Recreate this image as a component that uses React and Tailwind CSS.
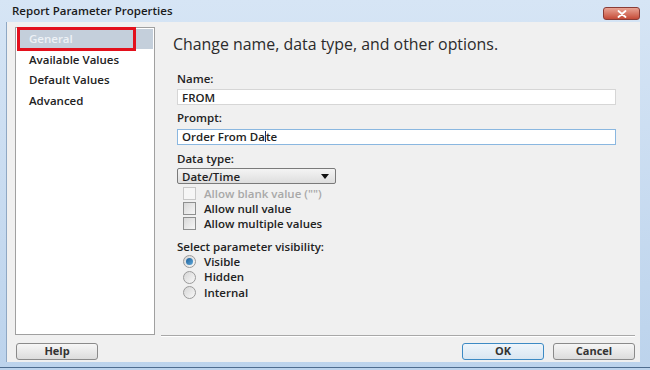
import React from "react";

const font = { fontFamily: '"Open Sans", "Noto Sans", sans-serif' };

function Checkbox({ label, disabled }) {
  return (
    <div className="flex items-center h-[15px]">
      <div
        className={
          "w-[13px] h-[13px] border " +
          (disabled
            ? "border-[#c8c8c8] bg-[#f6f6f6]"
            : "border-[#8e8f8f] bg-gradient-to-br from-[#d8d8d8] to-[#f6f6f6]")
        }
      />
      <span
        className={
          "ml-[8px] text-[11.5px] font-semibold leading-none " +
          (disabled ? "text-[#a8a8a8]" : "text-[#222]")
        }
      >
        {label}
      </span>
    </div>
  );
}

function Radio({ label, checked }) {
  return (
    <div className="flex items-center h-[15.5px]">
      <div className="w-[13px] h-[13px] rounded-full border border-[#9a9a9a] bg-gradient-to-br from-[#d6d6d6] to-[#f8f8f8] flex items-center justify-center">
        {checked && (
          <div className="w-[7px] h-[7px] rounded-full bg-gradient-to-br from-[#1a5f9a] to-[#5fa8d8]" />
        )}
      </div>
      <span className="ml-[8px] text-[11.5px] font-semibold leading-none text-[#222]">
        {label}
      </span>
    </div>
  );
}

function Button({ children, primary, className = "" }) {
  return (
    <div
      className={
        "h-[17px] w-[82px] rounded-[3px] border flex items-center justify-center text-[11px] font-bold text-[#333] " +
        (primary
          ? "border-[#3c8ac4] bg-gradient-to-b from-[#eef5fb] to-[#d9e6f1]"
          : "border-[#8a8a8a] bg-gradient-to-b from-[#f6f6f6] to-[#dcdcdc]") +
        " " +
        className
      }
    >
      {children}
    </div>
  );
}

export default function App() {
  return (
    <div
      style={font}
      className="w-[650px] h-[370px] bg-gradient-to-b from-[#d6e5f5] to-[#bcd3ec] flex flex-col overflow-hidden"
    >
      {/* Title bar */}
      <div className="h-[22px] flex items-center relative">
        <span className="ml-[12px] text-[11.5px] font-semibold text-[#1b1b1b] leading-none">
          Report Parameter Properties
        </span>
        <div className="absolute left-[603px] top-[7px] w-[37px] h-[13px] rounded-[3px] border border-[#8a3c36] bg-gradient-to-b from-[#e8a394] to-[#c44a37] flex items-center justify-center">
          <svg width="10" height="8" viewBox="0 0 10 8">
            <path d="M1.5 1 L8.5 7 M8.5 1 L1.5 7" stroke="#fff" strokeWidth="1.8" strokeLinecap="round" />
          </svg>
        </div>
      </div>

      {/* Client area */}
      <div className="ml-[6px] mr-[10px] h-[340px] bg-[#f0f0f0] flex flex-col border-l border-[#8fa8c4]">
        <div className="flex h-[313px]">
          {/* Left list */}
          <div className="ml-[8px] mt-[5px] w-[140px] h-[308px] bg-white border border-[#a0a0a0] relative pt-[1px] px-[1px]">
            <div className="h-[20px] bg-[#c4cfdb] flex items-center pl-[12px] text-[11.5px] text-[#eef2f6] font-semibold">
              General
            </div>
            <div className="h-[20.5px] flex items-center pl-[12px] text-[11.5px] text-[#222] font-semibold">
              Available Values
            </div>
            <div className="h-[20.5px] flex items-center pl-[12px] text-[11.5px] text-[#222] font-semibold">
              Default Values
            </div>
            <div className="h-[20.5px] flex items-center pl-[12px] text-[11.5px] text-[#222] font-semibold">
              Advanced
            </div>
            <div className="absolute left-[1px] top-[-1px] w-[119px] h-[24px] border-[3.5px] border-[#e3101c]" />
          </div>

          {/* Right content */}
          <div className="ml-[18px] flex-1 flex flex-col pr-[24px]">
            <div className="mt-[15px] text-[15.9px] text-[#2b2b2b] leading-none">
              Change name, data type, and other options.
            </div>
            <div className="mt-[20px] ml-[4px] text-[11.5px] font-semibold text-[#222] leading-none">
              Name:
            </div>
            <div className="mt-[5px] ml-[4px] h-[16px] bg-white border border-[#d6d6d6] flex items-center pl-[4px] text-[11.5px] font-semibold text-[#222]">
              FROM
            </div>
            <div className="mt-[7px] ml-[4px] text-[11.5px] font-semibold text-[#222] leading-none">
              Prompt:
            </div>
            <div className="mt-[5px] ml-[4px] h-[16px] bg-white border border-[#8ab7e0] flex items-center pl-[4px] text-[11.5px] font-semibold text-[#222]">
              <span>Order From Da</span>
              <span className="w-[1px] h-[11px] bg-[#1c2f6b]" />
              <span>te</span>
            </div>
            <div className="mt-[8px] ml-[4px] text-[11.5px] font-semibold text-[#222] leading-none">
              Data type:
            </div>
            <div className="mt-[4px] ml-[4px] w-[159px] h-[16px] rounded-[2px] border border-[#7a7a7a] bg-gradient-to-b from-[#f4f4f4] to-[#dedede] flex items-center justify-between pl-[4px] pr-[6px] text-[11.5px] font-semibold text-[#222]">
              <span>Date/Time</span>
              <svg width="8" height="5" viewBox="0 0 8 5">
                <path d="M0 0 H8 L4 5 Z" fill="#111" />
              </svg>
            </div>
            <div className="mt-[2px] ml-[10px] flex flex-col">
              <Checkbox label={'Allow blank value ("")'} disabled />
              <Checkbox label="Allow null value" />
              <Checkbox label="Allow multiple values" />
            </div>
            <div className="mt-[10px] ml-[4px] text-[11.5px] font-semibold text-[#222] leading-none">
              Select parameter visibility:
            </div>
            <div className="mt-[1px] ml-[10px] flex flex-col">
              <Radio label="Visible" checked />
              <Radio label="Hidden" />
              <Radio label="Internal" />
            </div>
          </div>
        </div>

        {/* Separator + buttons */}
        <div className="flex items-start">
          <div className="w-[154px]" />
          <div className="flex-1 mr-[5px] h-[2px] border-t border-[#a8a8a8] border-b border-b-white" />
        </div>
        <div className="mt-[6px] flex items-center">
          <Button className="ml-[9px]">Help</Button>
          <div className="flex-1" />
          <Button primary>OK</Button>
          <Button className="ml-[9px] mr-[5px]">Cancel</Button>
        </div>
      </div>

      {/* Bottom frame */}
      <div className="flex-1 flex flex-col">
        <div className="h-[5px]" />
        <div className="h-[1px] bg-[#4f6d8f]" />
      </div>
    </div>
  );
}
